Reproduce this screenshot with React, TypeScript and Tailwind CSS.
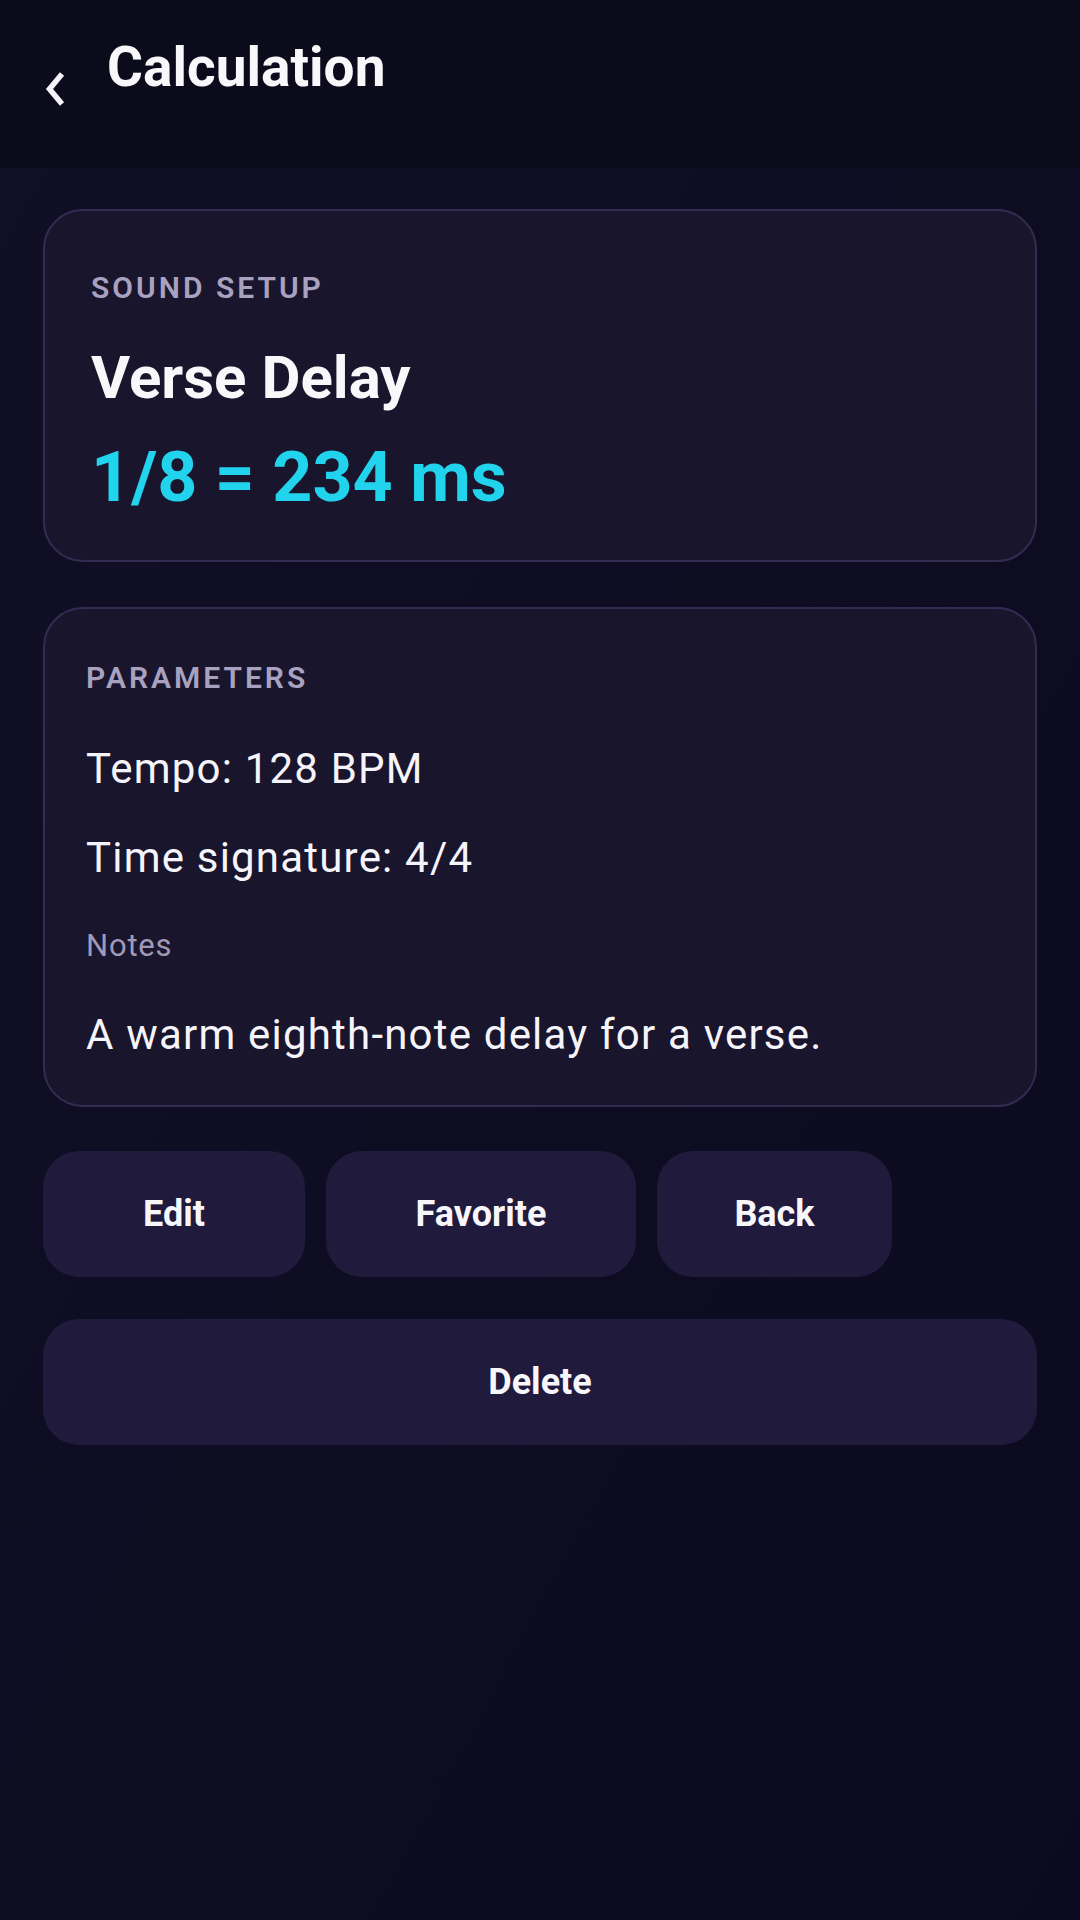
import React from 'react'

const font = { fontFamily: 'Roboto, "Noto Sans", sans-serif' }

function BackChevron() {
  return (
    <svg width="20" height="34" viewBox="0 0 20 34" className="mt-[72px] ml-[45px] shrink-0">
      <path d="M17 2 L4.5 17 L17 32" fill="none" stroke="#f5f4fa" strokeWidth="5.5" strokeLinecap="butt" strokeLinejoin="miter" />
    </svg>
  )
}

function ActionButton({ label, className }: { label: string; className: string }) {
  return (
    <button className={`h-[126px] rounded-[36px] bg-[#201a3d] text-[36px] leading-none font-bold text-[#f7f6fb] ${className}`}>
      {label}
    </button>
  )
}

export default function App() {
  return (
    <div style={font} className="w-[1080px] min-h-[1920px] bg-gradient-to-br from-[#110f26] to-[#0b0a1e] text-white">
      {/* header */}
      <div className="h-[168px] bg-[#0b0b1c] flex items-start">
        <BackChevron />
        <h1 className="mt-[40px] ml-[42px] text-[55px] leading-none font-bold text-[#f8f8fb]">Calculation</h1>
      </div>

      <div className="px-[43px] pt-[41px]">
        {/* summary card */}
        <div className="h-[353px] rounded-[40px] border-2 border-[#342b53] bg-[#19152d] px-[46px] pt-[62px]">
          <div className="text-[30px] leading-none font-semibold tracking-[3px] text-[#a8a2c0]">SOUND SETUP</div>
          <div className="mt-[45px] text-[60px] leading-none font-bold text-[#f8f8fb]">Verse Delay</div>
          <div className="mt-[34px] text-[70px] leading-none font-bold text-[#22d3ee]">1/8 = 234 ms</div>
        </div>

        {/* parameters card */}
        <div className="mt-[45px] h-[500px] rounded-[40px] border-2 border-[#342b53] bg-[#19152d] px-[41px] pt-[54px]">
          <div className="text-[30px] leading-none font-semibold tracking-[3px] text-[#a8a2c0]">PARAMETERS</div>
          <div className="mt-[55px] text-[42px] leading-none tracking-[1.2px] text-[#f5f4fa]">Tempo: 128 BPM</div>
          <div className="mt-[47px] text-[42px] leading-none tracking-[1.2px] text-[#f5f4fa]">Time signature: 4/4</div>
          <div className="mt-[51px] text-[31px] leading-none tracking-[0.8px] text-[#a09ab8]">Notes</div>
          <div className="mt-[53px] text-[42px] leading-none tracking-[1.2px] text-[#f5f4fa]">A warm eighth-note delay for a verse.</div>
        </div>

        {/* actions */}
        <div className="mt-[44px] flex gap-[21px]">
          <ActionButton label="Edit" className="w-[262px]" />
          <ActionButton label="Favorite" className="w-[310px]" />
          <ActionButton label="Back" className="w-[235px]" />
        </div>
        <div className="mt-[42px]">
          <ActionButton label="Delete" className="w-full" />
        </div>
      </div>
    </div>
  )
}
